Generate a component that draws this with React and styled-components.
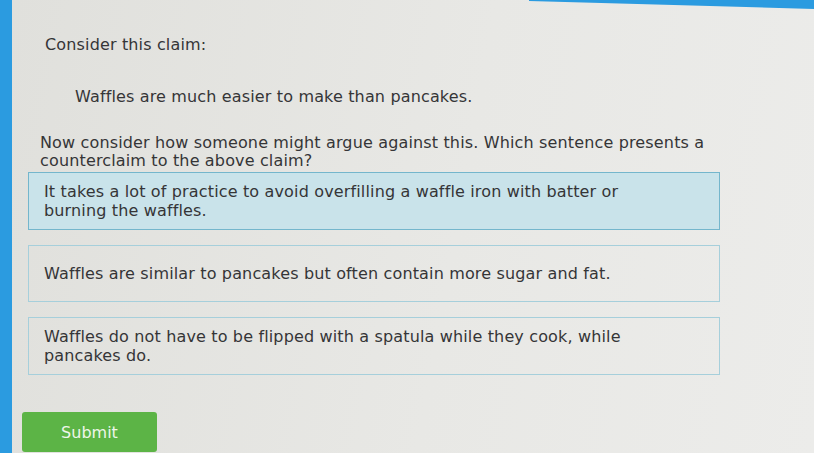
import React from 'react'
import styled, { createGlobalStyle } from 'styled-components'

const GlobalStyle = createGlobalStyle`
    html, body {
        margin: 0;
        padding: 0;
        background: #2b9be0;
    }
    * {
        box-sizing: border-box;
    }
`

const Screen = styled.div`
    display: flex;
    flex-direction: column;
    height: 453px;
    overflow: hidden;
    margin-left: 12px;
    background: linear-gradient(100deg, #e0e0dc 0%, #e8e8e5 55%, #ececea 100%);
    font-family: "DejaVu Sans", Verdana, sans-serif;
    color: #353537;
`

const TopEdge = styled.div`
    display: flex;
    justify-content: flex-end;
    height: 8px;
`

const Wedge = styled.div`
    width: 285px;
    height: 9px;
    background: #2b9be0;
    clip-path: polygon(0 0, 100% 0, 100% 100%, 0 10%);
`

const Content = styled.div`
    display: flex;
    flex-direction: column;
    padding: 0 80px 0 16px;
`

const Text = styled.p`
    margin: ${p => p.$top || 0}px 0 0 ${p => p.$indent || 0}px;
    font-size: 16px;
    line-height: 18px;
    letter-spacing: 0.15px;
    max-width: ${p => p.$max || 690}px;
`

const Options = styled.div`
    display: flex;
    flex-direction: column;
    gap: 15px;
    margin-top: 2px;
`

const Option = styled.div`
    display: flex;
    align-items: center;
    width: 692px;
    min-height: 57px;
    padding: 9px 15px;
    font-size: 16px;
    line-height: 19px;
    letter-spacing: 0.15px;
    border: 1.5px solid ${p => (p.$selected ? '#74b6cc' : '#a6cfdb')};
    background: ${p => (p.$selected ? '#c9e3ea' : 'transparent')};
    cursor: pointer;
`

const Label = styled.span`
    max-width: 610px;
`

const Submit = styled.button`
    margin: 37px 0 0 -6px;
    width: 135px;
    height: 40px;
    border: none;
    border-radius: 3px;
    background: #5cb446;
    color: #eef6ea;
    font-family: "DejaVu Sans", Verdana, sans-serif;
    font-size: 16px;
`

const options = [
    'It takes a lot of practice to avoid overfilling a waffle iron with batter or burning the waffles.',
    'Waffles are similar to pancakes but often contain more sugar and fat.',
    'Waffles do not have to be flipped with a spatula while they cook, while pancakes do.',
]

const App = () => {
    return (
        <>
            <GlobalStyle />
            <Screen>
                <TopEdge>
                    <Wedge />
                </TopEdge>
                <Content>
                    <Text $top={28} $indent={17}>Consider this claim:</Text>
                    <Text $top={34} $indent={47}>Waffles are much easier to make than pancakes.</Text>
                    <Text $top={28} $indent={12} $max={692}>
                        Now consider how someone might argue against this. Which sentence presents a
                        counterclaim to the above claim?
                    </Text>
                    <Options>
                        {options.map((o, i) => (
                            <Option key={i} $selected={i === 0}>
                                <Label>{o}</Label>
                            </Option>
                        ))}
                    </Options>
                    <Submit>Submit</Submit>
                </Content>
            </Screen>
        </>
    )
}

export default App
